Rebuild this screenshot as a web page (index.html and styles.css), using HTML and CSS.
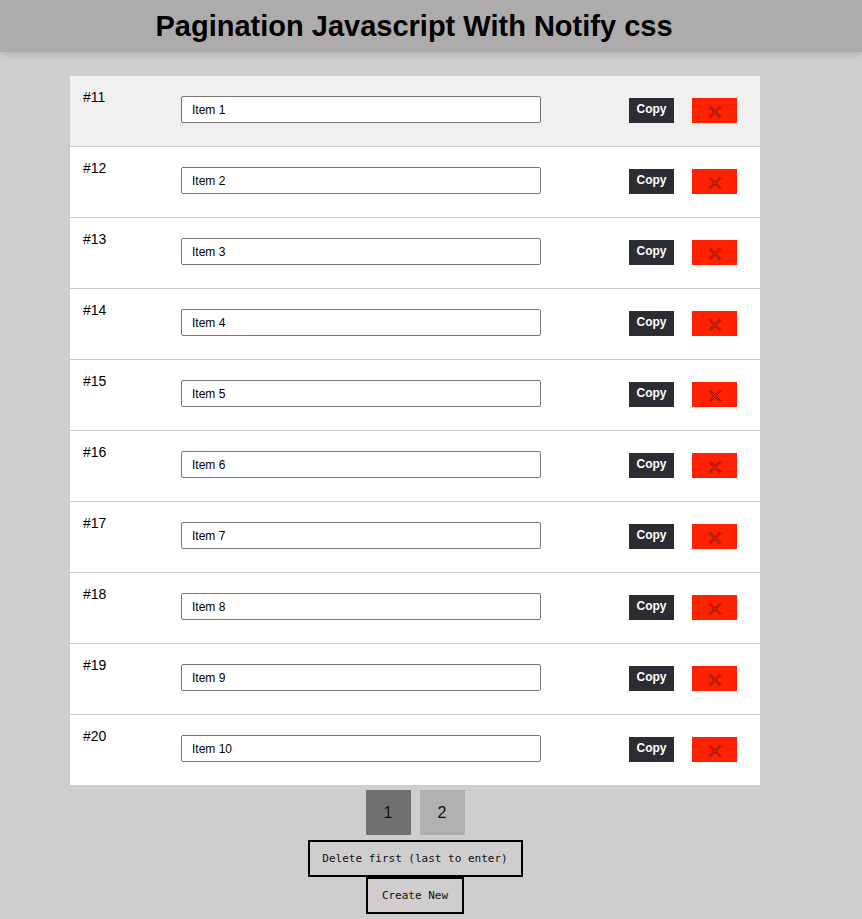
FILE: index.html
```html
<!DOCTYPE html>
<html>
<head>
<meta charset="utf-8">
<link rel="stylesheet" href="styles.css">
</head>
<body>
<header class="topbar"><h1 class="title">Pagination Javascript With Notify css</h1></header>
<main class="wrap">
  <div class="list">
    <div class="row row-hover"><span class="idx">#11</span><input class="field" value="Item 1"><button class="copy">Copy</button><button class="del"><svg width="14" height="14" viewBox="0 0 14 14"><path d="M1.5 1.5L12.5 12.5M12.5 1.5L1.5 12.5" stroke="#8a1a08" stroke-width="2.4"/><path d="M1.5 1.5L12.5 12.5M12.5 1.5L1.5 12.5" stroke="#ff2200" stroke-width="0.9"/></svg></button></div>
    <div class="row"><span class="idx">#12</span><input class="field" value="Item 2"><button class="copy">Copy</button><button class="del"><svg width="14" height="14" viewBox="0 0 14 14"><path d="M1.5 1.5L12.5 12.5M12.5 1.5L1.5 12.5" stroke="#8a1a08" stroke-width="2.4"/><path d="M1.5 1.5L12.5 12.5M12.5 1.5L1.5 12.5" stroke="#ff2200" stroke-width="0.9"/></svg></button></div>
    <div class="row"><span class="idx">#13</span><input class="field" value="Item 3"><button class="copy">Copy</button><button class="del"><svg width="14" height="14" viewBox="0 0 14 14"><path d="M1.5 1.5L12.5 12.5M12.5 1.5L1.5 12.5" stroke="#8a1a08" stroke-width="2.4"/><path d="M1.5 1.5L12.5 12.5M12.5 1.5L1.5 12.5" stroke="#ff2200" stroke-width="0.9"/></svg></button></div>
    <div class="row"><span class="idx">#14</span><input class="field" value="Item 4"><button class="copy">Copy</button><button class="del"><svg width="14" height="14" viewBox="0 0 14 14"><path d="M1.5 1.5L12.5 12.5M12.5 1.5L1.5 12.5" stroke="#8a1a08" stroke-width="2.4"/><path d="M1.5 1.5L12.5 12.5M12.5 1.5L1.5 12.5" stroke="#ff2200" stroke-width="0.9"/></svg></button></div>
    <div class="row"><span class="idx">#15</span><input class="field" value="Item 5"><button class="copy">Copy</button><button class="del"><svg width="14" height="14" viewBox="0 0 14 14"><path d="M1.5 1.5L12.5 12.5M12.5 1.5L1.5 12.5" stroke="#8a1a08" stroke-width="2.4"/><path d="M1.5 1.5L12.5 12.5M12.5 1.5L1.5 12.5" stroke="#ff2200" stroke-width="0.9"/></svg></button></div>
    <div class="row"><span class="idx">#16</span><input class="field" value="Item 6"><button class="copy">Copy</button><button class="del"><svg width="14" height="14" viewBox="0 0 14 14"><path d="M1.5 1.5L12.5 12.5M12.5 1.5L1.5 12.5" stroke="#8a1a08" stroke-width="2.4"/><path d="M1.5 1.5L12.5 12.5M12.5 1.5L1.5 12.5" stroke="#ff2200" stroke-width="0.9"/></svg></button></div>
    <div class="row"><span class="idx">#17</span><input class="field" value="Item 7"><button class="copy">Copy</button><button class="del"><svg width="14" height="14" viewBox="0 0 14 14"><path d="M1.5 1.5L12.5 12.5M12.5 1.5L1.5 12.5" stroke="#8a1a08" stroke-width="2.4"/><path d="M1.5 1.5L12.5 12.5M12.5 1.5L1.5 12.5" stroke="#ff2200" stroke-width="0.9"/></svg></button></div>
    <div class="row"><span class="idx">#18</span><input class="field" value="Item 8"><button class="copy">Copy</button><button class="del"><svg width="14" height="14" viewBox="0 0 14 14"><path d="M1.5 1.5L12.5 12.5M12.5 1.5L1.5 12.5" stroke="#8a1a08" stroke-width="2.4"/><path d="M1.5 1.5L12.5 12.5M12.5 1.5L1.5 12.5" stroke="#ff2200" stroke-width="0.9"/></svg></button></div>
    <div class="row"><span class="idx">#19</span><input class="field" value="Item 9"><button class="copy">Copy</button><button class="del"><svg width="14" height="14" viewBox="0 0 14 14"><path d="M1.5 1.5L12.5 12.5M12.5 1.5L1.5 12.5" stroke="#8a1a08" stroke-width="2.4"/><path d="M1.5 1.5L12.5 12.5M12.5 1.5L1.5 12.5" stroke="#ff2200" stroke-width="0.9"/></svg></button></div>
    <div class="row row-last"><span class="idx">#20</span><input class="field" value="Item 10"><button class="copy">Copy</button><button class="del"><svg width="14" height="14" viewBox="0 0 14 14"><path d="M1.5 1.5L12.5 12.5M12.5 1.5L1.5 12.5" stroke="#8a1a08" stroke-width="2.4"/><path d="M1.5 1.5L12.5 12.5M12.5 1.5L1.5 12.5" stroke="#ff2200" stroke-width="0.9"/></svg></button></div>
  </div>
  <div class="pager"><button class="page page-active">1</button><button class="page">2</button></div>
  <button class="action action-wide">Delete first (last to enter)</button>
  <button class="action action-small">Create New</button>
</main>
</body>
</html>
```
FILE: styles.css
```css
* { box-sizing: border-box; }
html, body { margin: 0; padding: 0; }
body {
  background: #cfcdcd;
  font-family: "Liberation Sans", Arial, sans-serif;
  height: 919px;
  overflow: hidden;
}
.topbar {
  height: 52px;
  background: #adabab;
  box-shadow: 0 3px 6px rgba(0,0,0,0.12);
  display: flex;
  justify-content: center;
  align-items: center;
  padding-right: 34px;
}
.title {
  margin: 0;
  font-size: 29px;
  font-weight: bold;
  color: #000;
  line-height: 1;
  padding-top: 1px;
}
.wrap {
  width: 690px;
  margin: 24px 0 0 70px;
  display: flex;
  flex-direction: column;
  align-items: center;
}
.list {
  width: 690px;
  background: #fff;
}
.row {
  height: 71px;
  display: flex;
  align-items: flex-start;
  padding: 20px 0 0 13px;
  border-bottom: 1px solid #cccccc;
  background: #fff;
}
.row-hover { background: #f0f0f0; }
.row-last { border-bottom: none; height: 70px; }
.idx {
  width: 98px;
  font-size: 14px;
  color: #000;
  margin-top: -7px;
}
.field {
  width: 360px;
  height: 27px;
  border: 1px solid #767676;
  border-radius: 2px;
  padding: 0 10px;
  font-family: "Liberation Sans", Arial, sans-serif;
  font-size: 12px;
  color: #000;
  background: #fff;
  outline: none;
}
.copy {
  margin: 2px 0 0 88px;
  width: 45px;
  height: 25px;
  border: none;
  padding: 0;
  background: #2b2d33;
  color: #fff;
  font-family: "Liberation Sans", Arial, sans-serif;
  font-size: 12px;
  font-weight: bold;
  padding-bottom: 3px;
}
.del {
  margin: 2px 0 0 18px;
  width: 45px;
  height: 25px;
  border: none;
  padding: 0;
  background: #ff2200;
  display: flex;
  align-items: center;
  justify-content: center;
  padding-top: 3px;
}
.pager {
  display: flex;
  gap: 9px;
  margin-top: 5px;
}
.page {
  width: 45px;
  height: 45px;
  border: none;
  background: #b0b0b0;
  color: #111;
  font-family: "Liberation Sans", Arial, sans-serif;
  font-size: 16px;
  padding: 0;
}
.page-active { background: #717171; }
.action {
  background: transparent;
  border: 2px solid #000;
  font-family: "DejaVu Sans Mono", monospace;
  font-size: 11px;
  color: #111;
  height: 37px;
  padding: 0;
}
.action-wide { width: 215px; margin-top: 5px; }
.action-small { width: 98px; margin-top: 0; }
```
